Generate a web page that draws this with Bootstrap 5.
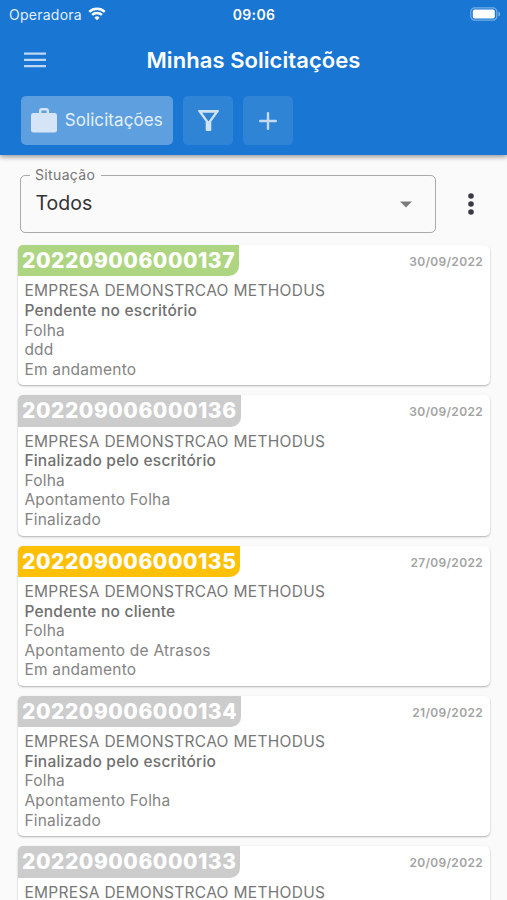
<!DOCTYPE html>
<html lang="pt-BR">
<head>
<meta charset="utf-8">
<meta name="viewport" content="width=device-width, initial-scale=1">
<title>Minhas Solicitações</title>
<link rel="stylesheet" href="https://cdn.jsdelivr.net/npm/bootstrap@5.3.0/dist/css/bootstrap.min.css">
<style>
body{font-family:Inter,"Liberation Sans",sans-serif;background:#fafafa;height:900px;overflow:hidden}
svg{display:block;flex:none}
.app-header{background:#1976d2;height:154.5px;box-shadow:0 2px 5px rgba(0,0,0,.4);z-index:1}
.app-main{height:745.5px;overflow:hidden}
.status-bar{height:28px;padding:0 7px 0 9px;font-size:14px}
.carrier{width:200px;letter-spacing:.25px;gap:6px;color:#e3effb}
.clock{font-weight:600;letter-spacing:.35px;padding-right:1px}
.battery-slot{width:200px}
.title-bar{height:64px;padding:0 24px}
.title-bar h1{font-size:22px;font-weight:600;letter-spacing:.06px;line-height:64px;padding-left:2px}
.tool-row{padding:4px 20.5px 0;gap:10px}
.tool{height:49px;width:50px;border-radius:5px;background:rgba(255,255,255,.1);color:#d0e2f6;border:0}
.tool-wide{width:152.5px;background:rgba(255,255,255,.3);font-size:17px;color:#e5f0fb;letter-spacing:.08px}
.tool-wide span{padding-top:1px}
.filter-row{padding:20px 33px 0 20px}
.select-box{width:415.5px;height:58.5px;border:1.5px solid #aaa;border-radius:5px;padding:0 23px 0 14.5px;font-size:19.5px;color:#333}
.select-box svg{margin-top:2px}
.select-label{left:9px;top:-9.5px;padding:0 6px 0 5px;font-size:14px;line-height:18px;letter-spacing:.35px;background:#fafafa;color:#757575}
.request-list{padding:12px 17px 0 18px;gap:10px}
.request{height:140.3px;background:#fff;border:0;border-radius:5px;box-shadow:0 1px 2px rgba(0,0,0,.3);flex:none}
.request-no{height:31.4px;line-height:32.6px;padding:0 4px;font-size:21px;font-weight:800;letter-spacing:.53px;color:#fff;border-radius:5px 0 10px 0}
.no-pending{background:#aed581}
.no-done{background:#ccc}
.no-client{background:#ffc107}
.request-date{font-size:12px;font-weight:600;letter-spacing:.32px;color:#a3a3a3;padding:8px 7px 0 0}
.request-body{padding:5px 6.4px;font-size:15.5px;line-height:19.6px;color:#848484;letter-spacing:.22px}
.company{color:#777;letter-spacing:.31px}
.stage{font-weight:500;color:#707070}
</style>
</head>
<body>
<header class="app-header text-white position-relative">
  <div class="status-bar d-flex justify-content-between align-items-center">
    <div class="carrier d-flex align-items-center"><span>Operadora</span>
      <svg width="18" height="14" viewBox="0 0 19 15" fill="none" stroke="#fff" stroke-width="2.6"><path d="M1.2 5.3a12 12 0 0 1 16.6 0M4.2 8.5a7.6 7.6 0 0 1 10.6 0"/><path d="M9.5 14.3 6.7 11.4a4 4 0 0 1 5.6 0z" fill="#fff" stroke="none"/></svg>
    </div>
    <div class="clock">09:06</div>
    <div class="battery-slot d-flex justify-content-end">
      <svg width="30" height="14" viewBox="0 0 30 14"><rect x=".8" y=".8" width="26" height="12.4" rx="4" fill="none" stroke="#77aee5" stroke-width="1.2"/><rect x="2.8" y="2.6" width="22" height="8.8" rx="2" fill="#fff"/><path d="M28.3 4.8a2.2 2.2 0 0 1 0 4.4z" fill="#77aee5"/></svg>
    </div>
  </div>
  <div class="title-bar d-flex align-items-center justify-content-between">
    <svg width="22" height="16" viewBox="0 0 22 16" fill="#bcd8f4"><path d="M0 .5h22v2.3H0zM0 6.7h22V9H0zM0 12.9h22v2.3H0z"/></svg>
    <h1 class="m-0">Minhas Solicitações</h1>
    <span class="px-2 mx-1"></span>
  </div>
  <nav class="tool-row d-flex">
    <button class="tool tool-wide d-flex align-items-center justify-content-center p-0">
      <svg class="me-2" width="26" height="25" viewBox="0 0 26 25" fill="#d5e5f7"><path fill-rule="evenodd" d="M8 5V2.5Q8 0 10.4 0h5.2Q18 0 18 2.5V5h5.6Q26 5 26 7.4v14.8q0 2.4-2.4 2.4H2.4Q0 24.6 0 22.2V7.4Q0 5 2.4 5zm2.4 0h5.2V2.5h-5.2z"/></svg>
      <span>Solicitações</span>
    </button>
    <button class="tool d-flex align-items-center justify-content-center p-0" aria-label="Filtrar">
      <svg width="21" height="21" viewBox="0 0 21 21" fill="#d0e2f6"><path fill-rule="evenodd" d="M.8 0h19.4q1.2.5.5 1.6L13.3 11.5V20q0 1-1 1H8.7q-1 0-1-1v-8.5L.3 1.6Q-.4.5.8 0zM4.200 2.7l6.3 8.8 6.3-8.8z"/></svg>
    </button>
    <button class="tool d-flex align-items-center justify-content-center p-0" aria-label="Adicionar">
      <svg width="18" height="18" viewBox="0 0 18 18" fill="none" stroke="#c4dbf3" stroke-width="2.4" stroke-linecap="round"><path d="M9 1.2v15.6M1.2 9h15.6"/></svg>
    </button>
  </nav>
</header>
<main class="app-main">
  <div class="filter-row d-flex align-items-center justify-content-between">
    <div class="select-box position-relative d-flex align-items-center justify-content-between">
      <span class="select-label position-absolute">Situação</span>
      <span>Todos</span>
      <svg width="12" height="7" viewBox="0 0 12 7"><path d="M0 .5h12L6 6.5z" fill="#7b7b7b"/></svg>
    </div>
    <svg width="6" height="22" viewBox="0 0 6 22" fill="#3a3a44"><circle cx="3" cy="3" r="2.8"/><circle cx="3" cy="11" r="2.8"/><circle cx="3" cy="19" r="2.8"/></svg>
  </div>
  <div class="request-list d-flex flex-column">
    <article class="request">
      <div class="d-flex justify-content-between"><div class="request-no no-pending">202209006000137</div><time class="request-date">30/09/2022</time></div>
      <div class="request-body"><div class="company">EMPRESA DEMONSTRCAO METHODUS</div><div class="stage">Pendente no escritório</div><div>Folha</div><div>ddd</div><div>Em andamento</div></div>
    </article>
    <article class="request">
      <div class="d-flex justify-content-between"><div class="request-no no-done">202209006000136</div><time class="request-date">30/09/2022</time></div>
      <div class="request-body"><div class="company">EMPRESA DEMONSTRCAO METHODUS</div><div class="stage">Finalizado pelo escritório</div><div>Folha</div><div>Apontamento Folha</div><div>Finalizado</div></div>
    </article>
    <article class="request">
      <div class="d-flex justify-content-between"><div class="request-no no-client">202209006000135</div><time class="request-date">27/09/2022</time></div>
      <div class="request-body"><div class="company">EMPRESA DEMONSTRCAO METHODUS</div><div class="stage">Pendente no cliente</div><div>Folha</div><div>Apontamento de Atrasos</div><div>Em andamento</div></div>
    </article>
    <article class="request">
      <div class="d-flex justify-content-between"><div class="request-no no-done">202209006000134</div><time class="request-date">21/09/2022</time></div>
      <div class="request-body"><div class="company">EMPRESA DEMONSTRCAO METHODUS</div><div class="stage">Finalizado pelo escritório</div><div>Folha</div><div>Apontamento Folha</div><div>Finalizado</div></div>
    </article>
    <article class="request">
      <div class="d-flex justify-content-between"><div class="request-no no-done">202209006000133</div><time class="request-date">20/09/2022</time></div>
      <div class="request-body"><div class="company">EMPRESA DEMONSTRCAO METHODUS</div></div>
    </article>
  </div>
</main>
<script src="https://cdn.jsdelivr.net/npm/bootstrap@5.3.0/dist/js/bootstrap.bundle.min.js"></script>
</body>
</html>
